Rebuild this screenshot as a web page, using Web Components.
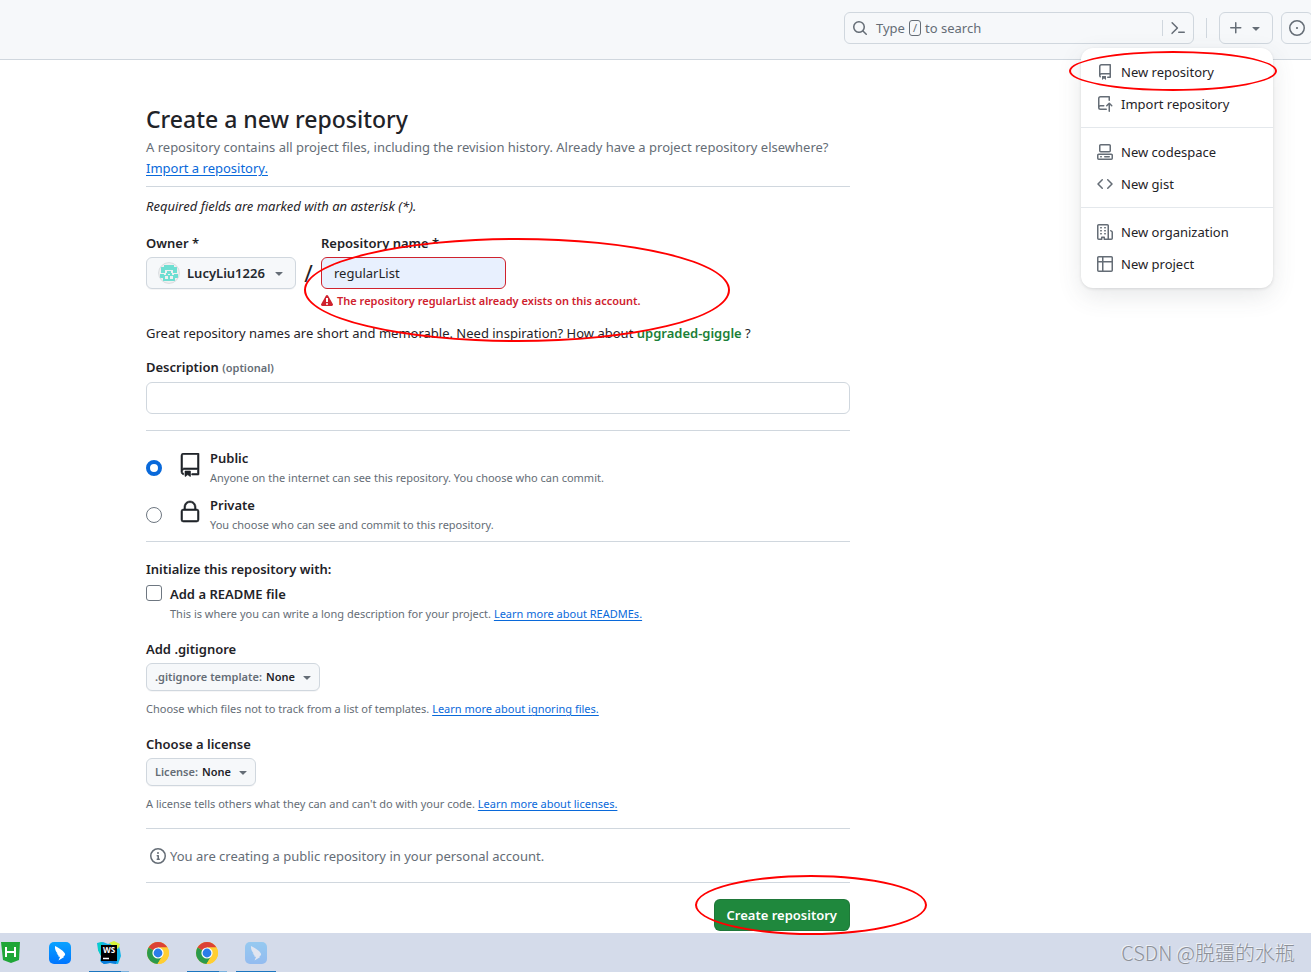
<!DOCTYPE html>
<html lang="en">
<head>
<meta charset="utf-8">
<meta name="viewport" content="width=device-width, initial-scale=1">
<title>Create a new repository</title>
<style>
  :root {
    --fg: #1f2328; --muted: #656d76; --line: #d0d7de; --soft: #f6f8fa;
    --link: #0969da; --danger: #cf222e; --go: #1f883d;
  }
  html { overflow-x: hidden; }
  body {
    margin: 0; min-height: 100vh; display: flex; flex-direction: column;
    font: 13px/20px "Noto Sans", "Open Sans", "Noto Sans CJK SC", sans-serif;
    color: var(--fg); background: #fff;
  }
</style>
</head>
<body>
<site-header></site-header>
<repo-form></repo-form>
<task-bar></task-bar>

<script>
const GLYPHS = {
  search: 'M10.68 11.74a6 6 0 0 1-7.922-8.982 6 6 0 0 1 8.982 7.922l3.04 3.04a.749.749 0 0 1-.326 1.275.749.749 0 0 1-.734-.215ZM11.5 7a4.499 4.499 0 1 0-8.997 0A4.499 4.499 0 0 0 11.5 7Z',
  prompt: 'm6.354 8.04-4.773 4.773a.75.75 0 1 0 1.061 1.06L7.945 8.57a.75.75 0 0 0 0-1.06L2.642 2.206a.75.75 0 0 0-1.06 1.061L6.353 8.04ZM8.75 11.5a.75.75 0 0 0 0 1.5h5.5a.75.75 0 0 0 0-1.5h-5.5Z',
  plus: 'M7.75 2a.75.75 0 0 1 .75.75V7h4.25a.75.75 0 0 1 0 1.5H8.5v4.25a.75.75 0 0 1-1.5 0V8.5H2.75a.75.75 0 0 1 0-1.5H7V2.75A.75.75 0 0 1 7.75 2Z',
  caret: 'm4.427 7.427 3.396 3.396a.25.25 0 0 0 .354 0l3.396-3.396A.25.25 0 0 0 11.396 7H4.604a.25.25 0 0 0-.177.427Z',
  issue: 'M8 9.1a1.1 1.1 0 1 0 0-2.2 1.1 1.1 0 0 0 0 2.2ZM8 0a8 8 0 1 1 0 16A8 8 0 0 1 8 0ZM1.5 8a6.5 6.5 0 1 0 13 0 6.5 6.5 0 0 0-13 0Z',
  repo: 'M2 2.5A2.5 2.5 0 0 1 4.5 0h8.75a.75.75 0 0 1 .75.75v12.5a.75.75 0 0 1-.75.75h-2.5a.75.75 0 0 1 0-1.5h1.75v-2h-8a1 1 0 0 0-.714 1.7.75.75 0 1 1-1.072 1.05A2.495 2.495 0 0 1 2 11.5Zm10.5-1h-8a1 1 0 0 0-1 1v6.708A2.486 2.486 0 0 1 4.5 9h8ZM5 12.25a.25.25 0 0 1 .25-.25h3.5a.25.25 0 0 1 .25.25v3.25a.25.25 0 0 1-.4.2l-1.45-1.087a.249.249 0 0 0-.3 0L5.4 15.7a.25.25 0 0 1-.4-.2Z',
  push: 'M1 2.5A2.5 2.5 0 0 1 3.5 0h8.75a.75.75 0 0 1 .75.75v3.5a.75.75 0 0 1-1.5 0V1.5h-8a1 1 0 0 0-1 1v6.708A2.493 2.493 0 0 1 3.5 9h3.25a.75.75 0 0 1 0 1.5H3.5a1 1 0 0 0 0 2h5.75a.75.75 0 0 1 0 1.5H3.5A2.5 2.5 0 0 1 1 11.5Zm13.23 7.79-1.224-1.224v6.184a.75.75 0 0 1-1.5 0V9.066L10.28 10.29a.75.75 0 0 1-1.06-1.061l2.505-2.504a.75.75 0 0 1 1.06 0L15.29 9.23a.751.751 0 0 1-.018 1.042.751.751 0 0 1-1.042.018Z',
  codespace: 'M0 11.25c0-.966.784-1.75 1.75-1.75h12.5c.966 0 1.75.784 1.75 1.75v3A1.75 1.75 0 0 1 14.25 16H1.75A1.75 1.75 0 0 1 0 14.25Zm2-9.5C2 .784 2.784 0 3.75 0h8.5C13.216 0 14 .784 14 1.75v5a1.75 1.75 0 0 1-1.75 1.75h-8.5A1.75 1.75 0 0 1 2 6.75Zm1.75-.25a.25.25 0 0 0-.25.25v5c0 .138.112.25.25.25h8.5a.25.25 0 0 0 .25-.25v-5a.25.25 0 0 0-.25-.25Zm-2 9.5a.25.25 0 0 0-.25.25v3c0 .138.112.25.25.25h12.5a.25.25 0 0 0 .25-.25v-3a.25.25 0 0 0-.25-.25ZM7 12.75a.75.75 0 0 1 .75-.75h4.5a.75.75 0 0 1 0 1.5h-4.5a.75.75 0 0 1-.75-.75Zm-4 0a.75.75 0 0 1 .75-.75h.5a.75.75 0 0 1 0 1.5h-.5a.75.75 0 0 1-.75-.75Z',
  code: 'm11.28 3.22 4.25 4.25a.75.75 0 0 1 0 1.06l-4.25 4.25a.749.749 0 0 1-1.275-.326.749.749 0 0 1 .215-.734L13.94 8l-3.72-3.72a.749.749 0 0 1 .326-1.275.749.749 0 0 1 .734.215Zm-6.56 0a.751.751 0 0 1 1.042.018.751.751 0 0 1 .018 1.042L2.06 8l3.72 3.72a.749.749 0 0 1-.326 1.275.749.749 0 0 1-.734-.215L.47 8.53a.75.75 0 0 1 0-1.06Z',
  org: 'M1.75 16A1.75 1.75 0 0 1 0 14.25V1.75C0 .784.784 0 1.75 0h8.5C11.216 0 12 .784 12 1.75v12.5c0 .085-.006.168-.018.25h2.268a.25.25 0 0 0 .25-.25V8.285a.25.25 0 0 0-.111-.208l-1.055-.703a.749.749 0 1 1 .832-1.248l1.055.703c.487.325.779.871.779 1.456v5.965A1.75 1.75 0 0 1 14.25 16h-3.5a.766.766 0 0 1-.197-.026c-.099.017-.2.026-.303.026h-3a.75.75 0 0 1-.75-.75V14h-1v1.25a.75.75 0 0 1-.75.75Zm-.25-1.75c0 .138.112.25.25.25H4v-1.25a.75.75 0 0 1 .75-.75h2.5a.75.75 0 0 1 .75.75v1.25h2.25a.25.25 0 0 0 .25-.25V1.75a.25.25 0 0 0-.25-.25h-8.5a.25.25 0 0 0-.25.25ZM3.75 6h.5a.75.75 0 0 1 0 1.5h-.5a.75.75 0 0 1 0-1.5ZM3 3.75A.75.75 0 0 1 3.75 3h.5a.75.75 0 0 1 0 1.5h-.5A.75.75 0 0 1 3 3.75Zm4 3A.75.75 0 0 1 7.75 6h.5a.75.75 0 0 1 0 1.5h-.5A.75.75 0 0 1 7 6.75ZM7.75 3h.5a.75.75 0 0 1 0 1.5h-.5a.75.75 0 0 1 0-1.5ZM3 9.75A.75.75 0 0 1 3.75 9h.5a.75.75 0 0 1 0 1.5h-.5A.75.75 0 0 1 3 9.75ZM7.75 9h.5a.75.75 0 0 1 0 1.5h-.5a.75.75 0 0 1 0-1.5Z',
  project: 'M0 1.75C0 .784.784 0 1.75 0h12.5C15.216 0 16 .784 16 1.75v12.5A1.75 1.75 0 0 1 14.25 16H1.75A1.75 1.75 0 0 1 0 14.25ZM6.5 6.5v8h7.75a.25.25 0 0 0 .25-.25V6.5Zm8-1.5V1.75a.25.25 0 0 0-.25-.25H6.5V5Zm-13 1.5v7.75c0 .138.112.25.25.25H5v-8ZM5 5V1.5H1.75a.25.25 0 0 0-.25.25V5Z',
  info: 'M0 8a8 8 0 1 1 16 0A8 8 0 0 1 0 8Zm8-6.5a6.5 6.5 0 1 0 0 13 6.5 6.5 0 0 0 0-13ZM6.5 7.75A.75.75 0 0 1 7.25 7h1a.75.75 0 0 1 .75.75v2.75h.25a.75.75 0 0 1 0 1.5h-2a.75.75 0 0 1 0-1.5h.25v-2h-.25a.75.75 0 0 1-.75-.75ZM8 6a1 1 0 1 1 0-2 1 1 0 0 1 0 2Z',
  alert: [12, 'M4.855.708c.5-.896 1.79-.896 2.29 0l4.675 8.351a1.312 1.312 0 0 1-1.146 1.954H1.33A1.313 1.313 0 0 1 .183 9.058ZM7 7V3H5v4Zm-1 3a1 1 0 1 0 0-2 1 1 0 0 0 0 2Z'],
  repoLarge: [24, 'M3 2.75A2.75 2.75 0 0 1 5.75 0h14.5a.75.75 0 0 1 .75.75v20.5a.75.75 0 0 1-.75.75h-6a.75.75 0 0 1 0-1.5h5.25v-4H6A1.5 1.5 0 0 0 4.5 18v.75c0 .716.43 1.334 1.05 1.605a.75.75 0 0 1-.6 1.374A3.25 3.25 0 0 1 3 18.75ZM19.5 1.5H5.75c-.69 0-1.25.56-1.25 1.25v12.651A2.989 2.989 0 0 1 6 15h13.5ZM7 18.25a.25.25 0 0 1 .25-.25h5a.25.25 0 0 1 .25.25v5.01a.25.25 0 0 1-.397.201l-2.206-1.604a.25.25 0 0 0-.294 0L7.397 23.46a.25.25 0 0 1-.397-.2Z'],
  lockLarge: [24, 'M6 9V7.25C6 3.845 8.503 1 12 1s6 2.845 6 6.25V9h.5a2.5 2.5 0 0 1 2.5 2.5v8a2.5 2.5 0 0 1-2.5 2.5h-13A2.5 2.5 0 0 1 3 19.5v-8A2.5 2.5 0 0 1 5.5 9Zm-1.5 2.5v8a1 1 0 0 0 1 1h13a1 1 0 0 0 1-1v-8a1 1 0 0 0-1-1h-13a1 1 0 0 0-1 1Zm3-4.25V9h9V7.25c0-2.67-1.922-4.75-4.5-4.75-2.578 0-4.5 2.08-4.5 4.75Z']
};

function define(name, html) {
  customElements.define(name, class extends HTMLElement {
    constructor() {
      super();
      const t = document.createElement('template');
      t.innerHTML = typeof html === 'function' ? html(this) : html;
      this.attachShadow({ mode: 'open' }).append(t.content.cloneNode(true));
    }
  });
}

define('ui-icon', el => {
  const g = GLYPHS[el.getAttribute('name')];
  const [size, d] = Array.isArray(g) ? g : [16, g];
  const stroke = size === 24 ? 'stroke="currentColor" stroke-width=".6"' : '';
  return `<style>:host{display:block;flex:none;width:${size}px;height:${size}px}svg{display:block}</style>
    <svg width="${size}" height="${size}" viewBox="0 0 ${size} ${size}" fill="currentColor" ${stroke} aria-hidden="true"><path fill-rule="evenodd" d="${d}"/></svg>`;
});

/* Highlight ring laid over the content it points at */
define('mark-ring', `<style>
  :host{display:block;position:absolute;z-index:10;pointer-events:none;box-sizing:border-box;border:2px solid #f00;border-radius:50%}
</style>`);

define('menu-item', el => `<style>
  :host{display:block}
  a{display:flex;align-items:center;gap:8px;height:32px;padding:0 16px;color:var(--fg);text-decoration:none}
  ui-icon{color:var(--muted)}
</style><a href="#"><ui-icon name="${el.getAttribute('icon')}"></ui-icon><slot></slot></a>`);

define('create-menu', `<style>
  :host{display:block;width:192px;box-sizing:border-box;padding:8px 0;border-radius:12px;background:#fff;
    box-shadow:0 1px 3px rgba(31,35,40,.12),0 8px 24px rgba(66,74,83,.12)}
  hr{height:1px;margin:7px 0 8px;border:0;background:#e4e8ec}
  mark-ring{left:-12px;top:3px;width:208px;height:40px}
</style>
<nav aria-label="Create new">
  <menu-item icon="repo">New repository</menu-item>
  <menu-item icon="push">Import repository</menu-item>
  <hr>
  <menu-item icon="codespace">New codespace</menu-item>
  <menu-item icon="code">New gist</menu-item>
  <hr>
  <menu-item icon="org">New organization</menu-item>
  <menu-item icon="project">New project</menu-item>
</nav><mark-ring></mark-ring>`);

define('site-header', `<style>
  :host{display:block;background:var(--soft);border-bottom:1px solid var(--line)}
  header{display:flex;justify-content:flex-end;align-items:center;height:59px;box-sizing:border-box;padding-bottom:3px;margin-right:-2px}
  button{font:inherit;color:var(--muted);background:none;border:0;margin:0;padding:0;display:flex;align-items:center;cursor:pointer}
  .search{display:flex;align-items:center;width:350px;height:32px;box-sizing:border-box;border:1px solid var(--line);border-radius:6px}
  .query{flex:1;height:100%;padding-left:7px}
  .query ui-icon{margin-right:8px}
  kbd{font:inherit;font-size:11px;line-height:14px;border:1px solid var(--muted);border-radius:3px;padding:0 3px;margin:0 4px}
  .palette{border-left:1px solid var(--line);height:16px;padding:0 7px}
  .rule{width:1px;height:20px;background:var(--line);margin:0 12px}
  .box{height:32px;box-sizing:border-box;border:1px solid var(--line);border-radius:6px;padding:0 7px;justify-content:center}
  .add{width:54px;padding:0 8px;gap:4px}
  .create{position:relative;margin-right:8px}
  create-menu{position:absolute;top:36px;right:0;z-index:5}
</style>
<header>
  <div class="search">
    <button class="query"><ui-icon name="search"></ui-icon>Type <kbd>/</kbd> to search</button>
    <button class="palette" aria-label="Command palette"><ui-icon name="prompt"></ui-icon></button>
  </div>
  <span class="rule"></span>
  <div class="create">
    <button class="box add" aria-label="Create new"><ui-icon name="plus"></ui-icon><ui-icon name="caret"></ui-icon></button>
    <create-menu></create-menu>
  </div>
  <button class="box" aria-label="Issues"><ui-icon name="issue"></ui-icon></button>
</header>`);

define('user-avatar', `<style>:host{display:block;flex:none;width:22px;height:22px}svg{display:block}</style>
<svg width="22" height="22" viewBox="0 0 22 22" aria-hidden="true">
  <clipPath id="c"><circle cx="11" cy="11" r="10"/></clipPath>
  <circle cx="11" cy="11" r="10.400" fill="#f0f0f0" stroke="#d8dcdf"/>
  <g clip-path="url(#c)" fill="#6fded2" fill-rule="evenodd">
    <path d="M6 3h10v2h3v6h-4V8H7v3H3V5h3ZM9 9h4v3h-4Z"/>
    <path d="M2 12h4v1h2v-2h2v2h2v-2h2v2h2v-1h4v4h-3v3H5v-3H2Zm5 2v3h3v-3Zm5 0v3h3v-3Z"/>
  </g>
</svg>`);

/* Drop-down: lead content in the default slot, the value in a real select */
define('pick-box', el => `<style>
  :host{display:flex;width:max-content}
  .box{display:flex;align-items:center;position:relative;height:28px;box-sizing:border-box;padding-left:8px;border:1px solid var(--line);border-radius:6px;
    background:var(--soft);box-shadow:0 1px 0 rgba(31,35,40,.04);font-size:11px;font-weight:600;color:var(--muted)}
  select{appearance:none;font:inherit;color:var(--fg);background:none;border:0;margin:0;padding:0 24px 0 4px;height:100%;outline:0}
  ui-icon{position:absolute;right:4px;color:var(--muted);pointer-events:none}
  :host([large]) .box{height:32px;padding-left:11px;font-size:13px}
  :host([large]) select{padding:0 30px 0 7px;color:#24292f}
  :host([large]) ui-icon{right:8px}
</style><label class="box"><slot></slot><select aria-label="${el.getAttribute('label')}"><option>${el.getAttribute('value')}</option></select><ui-icon name="caret"></ui-icon></label>`);

define('visibility-choice', `<style>
  :host{display:flex;flex-direction:column;gap:7px}
  label{display:grid;grid-template-columns:16px 24px 1fr;align-items:center;column-gap:16px}
  input{appearance:none;box-sizing:border-box;width:16px;height:16px;margin:0;border:1px solid #6e7781;border-radius:50%;background:#fff}
  input:checked{border:4px solid var(--link)}
  ui-icon{align-self:start;margin-top:5px}
  .text{display:flex;flex-direction:column;margin-left:-8px}
  b{font-weight:600}
  small{font-size:11px;color:var(--muted)}
</style>
<label><input type="radio" name="v" checked><ui-icon name="repoLarge"></ui-icon><span class="text"><b>Public</b><small>Anyone on the internet can see this repository. You choose who can commit.</small></span></label>
<label><input type="radio" name="v"><ui-icon name="lockLarge"></ui-icon><span class="text"><b>Private</b><small>You choose who can see and commit to this repository.</small></span></label>`);

define('form-section', el => `<style>
  :host{display:block;margin-top:15px}
  h2{margin:0 0 4px;font:inherit;font-weight:600}
  p{margin:8px 0 0;font-size:11px;color:var(--muted)}
</style><h2>${el.getAttribute('heading')}</h2><slot></slot><p><slot name="note"></slot></p>`);

define('repo-form', `<style>
  :host{display:block;flex:1;padding:41px 24px 2px 146px}
  form{max-width:704px}
  h1{margin:0;font-size:23px;line-height:36px;font-weight:500}
  p{margin:0}
  a{color:var(--link);text-underline-offset:2px}
  hr{height:1px;margin:0;border:0;background:var(--line)}
  .lead{line-height:21px;color:var(--muted);margin-bottom:7px}
  .required{margin:9px 0 17px}
  .lab{display:block;font-weight:600;margin-bottom:4px}
  .row{display:flex;align-items:flex-start}
  .slash{width:25px;padding-top:24px;text-align:center;font-size:23px;line-height:32px}
  .name{position:relative}
  input.t{box-sizing:border-box;display:block;width:100%;height:32px;padding:0 12px;font:inherit;color:var(--fg);border:1px solid var(--line);border-radius:6px;background:#fff;outline:0}
  .name input.t{width:185px;border-color:var(--danger);background:#e8f0fe}
  .error{display:flex;align-items:center;gap:4px;margin-top:4px;font-size:11px;line-height:16px;font-weight:600;color:var(--danger)}
  .hint{margin:14px 0}
  .hint b{font-weight:600;color:#1a7f37}
  small{font-size:11px;font-weight:600;color:var(--muted)}
  .desc{margin-bottom:16px}
  visibility-choice{margin:17px 0 6px}
  .init{margin:17px 0 5px;font-weight:600}
  .check{display:grid;grid-template-columns:16px 1fr;column-gap:8px}
  .check input{appearance:none;width:16px;height:16px;margin:1px 0 0;box-sizing:border-box;border:1px solid #6e7781;border-radius:3px;background:#fff}
  .check label{font-weight:600}
  .check p{grid-column:2;font-size:11px;color:var(--muted)}
  .end{margin-top:14px}
  .notice{display:flex;align-items:center;gap:4px;margin:17px 0 16px;padding-left:4px;color:var(--muted)}
  .submit{position:relative;display:flex;justify-content:flex-end;margin-top:16px}
  .submit button{height:32px;padding:0 12px;border:1px solid rgba(31,35,40,.15);border-radius:6px;background:var(--go);color:#fff;font:inherit;font-weight:600}
  .name mark-ring{left:-17px;top:5px;width:426px;height:104px}
  .submit mark-ring{right:-77px;top:-24px;width:232px;height:60px}
</style>
<form onsubmit="return false">
  <h1>Create a new repository</h1>
  <p class="lead">A repository contains all project files, including the revision history. Already have a project repository elsewhere?<br><a href="#">Import a repository.</a></p>
  <hr>
  <p class="required"><i>Required fields are marked with an asterisk (*).</i></p>
  <div class="row">
    <div><span class="lab">Owner *</span><pick-box large label="Owner" value="LucyLiu1226"><user-avatar></user-avatar></pick-box></div>
    <span class="slash">/</span>
    <div class="name">
      <label class="lab" for="n">Repository name *</label>
      <input class="t" id="n" value="regularList">
      <p class="error"><ui-icon name="alert"></ui-icon>The repository regularList already exists on this account.</p>
      <mark-ring></mark-ring>
    </div>
  </div>
  <p class="hint">Great repository names are short and memorable. Need inspiration? How about <b>upgraded-giggle</b> ?</p>
  <div class="desc"><label class="lab" for="d">Description <small>(optional)</small></label><input class="t" id="d"></div>
  <hr>
  <visibility-choice></visibility-choice>
  <hr>
  <p class="init">Initialize this repository with:</p>
  <div class="check"><input type="checkbox" id="r"><label for="r">Add a README file</label>
    <p>This is where you can write a long description for your project. <a href="#">Learn more about READMEs.</a></p></div>
  <form-section heading="Add .gitignore"><pick-box label=".gitignore template" value="None">.gitignore template:</pick-box>
    <span slot="note">Choose which files not to track from a list of templates. <a href="#">Learn more about ignoring files.</a></span></form-section>
  <form-section heading="Choose a license"><pick-box label="License" value="None">License:</pick-box>
    <span slot="note">A license tells others what they can and can't do with your code. <a href="#">Learn more about licenses.</a></span></form-section>
  <hr class="end">
  <p class="notice"><ui-icon name="info"></ui-icon>You are creating a public repository in your personal account.</p>
  <hr>
  <div class="submit"><button type="submit">Create repository</button><mark-ring></mark-ring></div>
</form>`);

const APPS = {
  h: `<path d="M2 1h19l-1 18-8 3-8-3Z" fill="#1fa637"/><path d="M7 6v10M16 6v10M7 11h9" stroke="#fff" stroke-width="2" fill="none"/>`,
  bird: `<defs><linearGradient id="b" x2="0" y2="1"><stop stop-color="#0aa2ff"/><stop offset="1" stop-color="#0075ff"/></linearGradient></defs><rect x="1" y="1" width="22" height="22" rx="5" fill="url(#b)"/><path d="M7 5c3 1.500 7.500 4 9.600 7 .7 1 .7 1.600 0 2.600L15.200 16h1l-5.700 3.500L12 16l-2.300-1 1-.6-2.200-2 1.200.1C7.800 10.500 6.700 8 7 5Z" fill="#fff"/>`,
  ws: `<path d="M0 2 6 1l5 2 5-2 6 4 1 4 1 6-3 8-8-1-6 1-4-3L4 15 1 9Z" fill="#12b4e8"/><path d="m12 2 5-2 6 3-2 5-5-3Z" fill="#d8f23c"/><path d="m1 2 4-1-1 14-3-6Z" fill="#08cfc9"/><path d="m4 20 16-1-1 4-6-1-6 1-3-2Z" fill="#087cdb"/><rect x="4" y="4" width="16" height="16" fill="#000"/><path d="M6 17.500h6" stroke="#fff" stroke-width="1.500"/>`,
  chrome: `<circle cx="12" cy="12" r="11" fill="#ffce32"/><path d="M12 12 2.500 6.500A11 11 0 0 1 21.500 6.500H12Z" fill="#dc4136"/><path d="M12 12 2.500 6.500A11 11 0 0 0 11.500 23l5-8.500Z" fill="#2a9a4c"/><path d="M12 6.500h9.500A11 11 0 0 1 11.500 23l5.300-8.300Z" fill="#ffce32"/><circle cx="12" cy="12" r="5.600" fill="#fff"/><circle cx="12" cy="12" r="4.400" fill="#2b7de9"/>`
};
define('task-app', el => `<style>
  :host{display:block;width:40px;height:39px}
  button{position:relative;display:flex;align-items:center;justify-content:center;width:40px;height:39px;margin:0;padding:0;border:0;background:none}
  svg{display:block}
  :host([faded]) svg{opacity:.3}
  :host([open]) button{box-shadow:inset 0 -1px #1b76c0}
  :host([many]) button::after{content:"";position:absolute;right:0;bottom:0;width:8px;height:1px;background:#7ab3e0}
  span{position:absolute;left:13px;top:12px;width:14px;font:700 8px/10px "Open Sans",sans-serif;color:#fff;text-align:center}
</style><button aria-label="${el.getAttribute('label')}"><svg width="24" height="24" viewBox="0 0 24 24" aria-hidden="true">${APPS[el.getAttribute('app')]}</svg>${el.getAttribute('app') === 'ws' ? '<span>WS</span>' : ''}</button>`);

define('task-bar', `<style>
  :host{display:flex;align-items:center;height:39px;background:#d4dbea;overflow:hidden}
  nav{display:flex;gap:9px;margin-left:-9px}
  .credit{margin-left:auto;padding-right:16px;font:300 20px/24px "Noto Sans CJK SC",sans-serif;color:#8d9198;text-shadow:-1px -1px #eef1f6}
</style>
<nav aria-label="Taskbar">
  <task-app app="h" label="Editor"></task-app>
  <task-app app="bird" label="Messenger"></task-app>
  <task-app app="ws" label="WebStorm" open many></task-app>
  <task-app app="chrome" label="Chrome"></task-app>
  <task-app app="chrome" label="Chrome window" open many></task-app>
  <task-app app="bird" label="Messenger window" faded open></task-app>
</nav>
<span class="credit">CSDN @脱疆的水瓶</span>`);
</script>
</body>
</html>
